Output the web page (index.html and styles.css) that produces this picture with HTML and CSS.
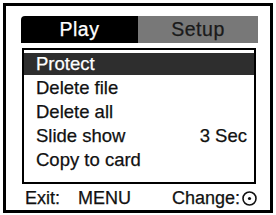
FILE: index.html
```html
<!DOCTYPE html>
<html lang="en">
<head>
  <meta charset="UTF-8">
  <title>Play menu</title>
  <link rel="stylesheet" href="styles.css">
</head>
<body>
<div class="screen">
  <div class="tabs">
    <div class="tab active">Play</div>
    <div class="tab">Setup</div>
  </div>

  <ul class="menu">
    <li class="selected">Protect</li>
    <li>Delete file</li>
    <li>Delete all</li>
    <li><span>Slide show</span><span>3 Sec</span></li>
    <li>Copy to card</li>
  </ul>

  <div class="footer">
    <div>Exit:<span class="key">MENU</span></div>
    <div class="change">Change:
      <svg width="15" height="15" viewBox="0 0 15 15">
        <circle cx="7.5" cy="7.5" r="6.5" fill="none" stroke="#111" stroke-width="1.6"/>
        <circle cx="7.5" cy="7.5" r="1.6" fill="#111"/>
      </svg>
    </div>
  </div>
</div>
</body>
</html>
```

FILE: styles.css
```css
body {
  margin: 0;
  font-family: "Liberation Sans", Arial, sans-serif;
  background: #fff;
  color: #111;
  -webkit-text-stroke: 0.25px;
}

.screen {
  margin: 3px;
  width: 270px;
  height: 210px;
  box-sizing: border-box;
  border: 3px solid #000;
  padding: 10px 12px 0 15px;
}

.tabs {
  display: flex;
  width: 237px;
  height: 27px;
}

.tab {
  font-size: 19.5px;
  letter-spacing: 0.5px;
  line-height: 27px;
  text-align: center;
  background-color: #787878;
  color: #1a1a1a;
  width: 120px;
}

.tab.active {
  width: 117px;
  background-color: #000;
  color: #fff;
  border-top-left-radius: 4px;
}

.menu {
  list-style: none;
  margin: 5px 0 0 1px;
  padding: 3px 0 11px 0;
  width: 234px;
  box-sizing: border-box;
  border: 2px solid #000;
}

.menu li {
  display: flex;
  justify-content: space-between;
  font-size: 18.5px;
  line-height: 22px;
  margin-bottom: 2px;
  padding: 0 7px 0 12px;
}

.menu li:last-child {
  margin-bottom: 0;
}

.menu li.selected {
  background-color: #2e2e2e;
  color: #fff;
}

.footer {
  display: flex;
  justify-content: space-between;
  align-items: center;
  font-size: 18px;
  margin-top: 4px;
  padding: 0 1px 0 4px;
}

.key {
  margin-left: 18px;
}

.change {
  display: flex;
  align-items: center;
  gap: 2px;
}
```
